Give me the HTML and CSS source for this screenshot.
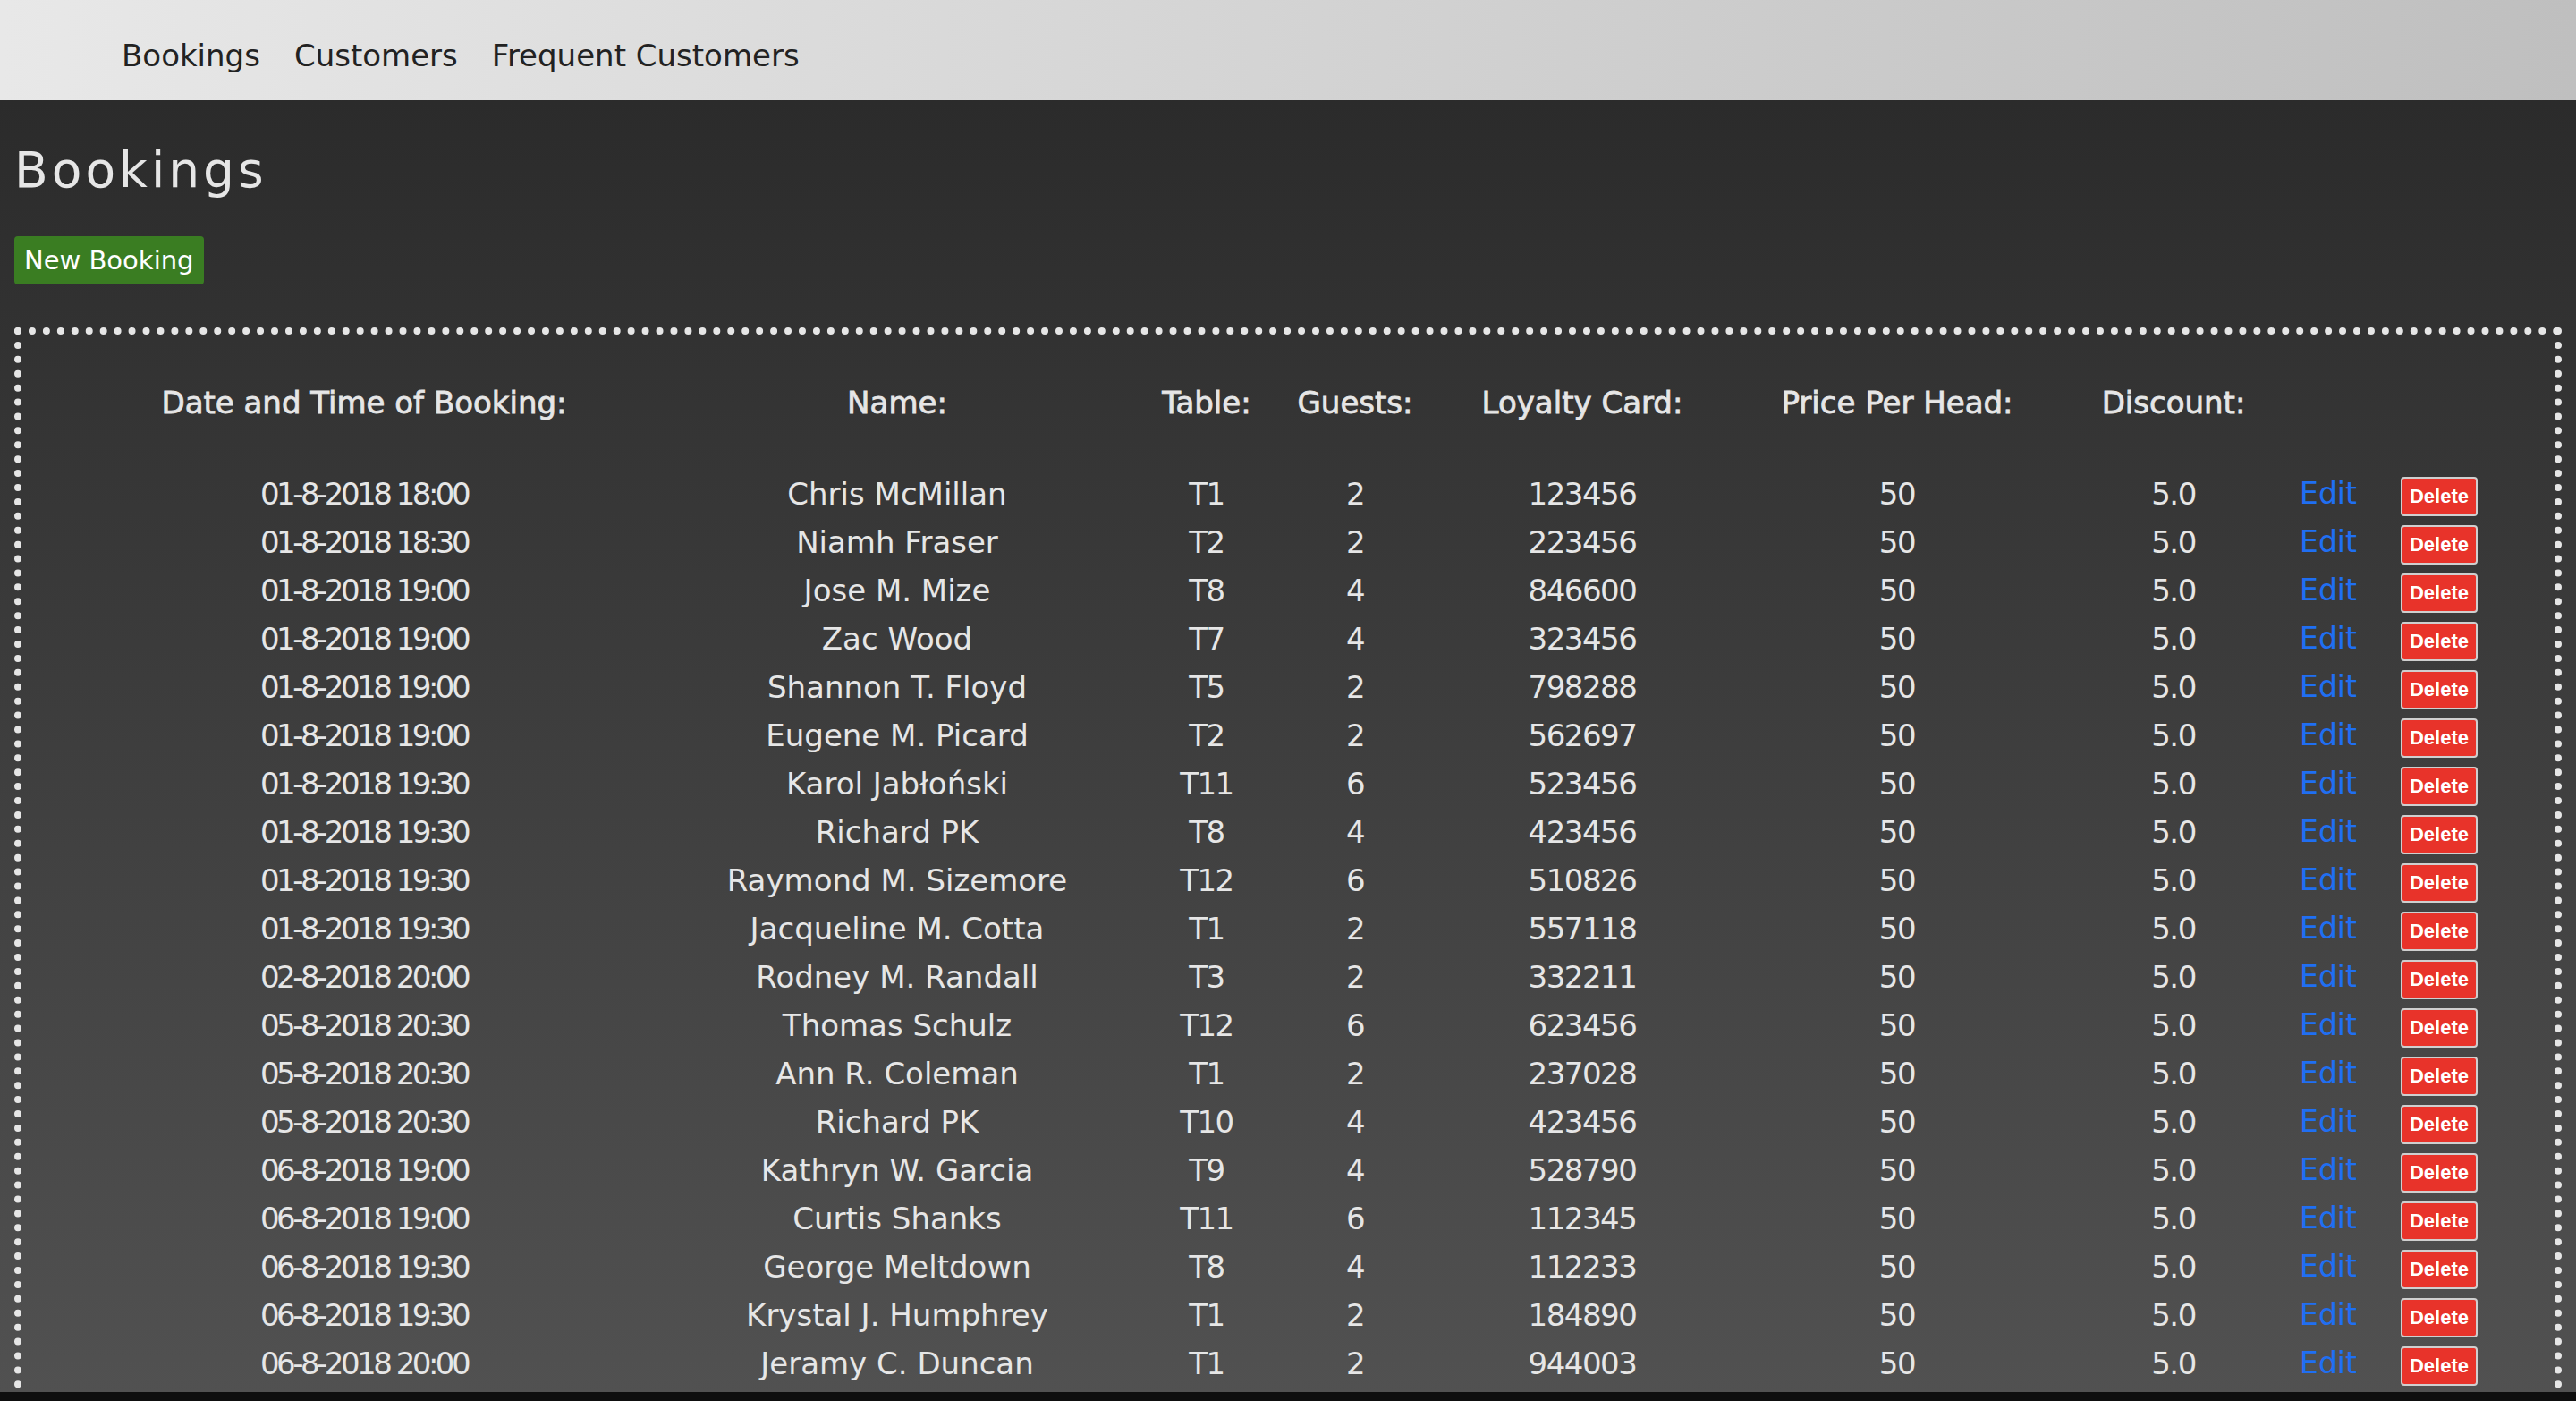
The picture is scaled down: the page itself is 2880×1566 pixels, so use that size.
FILE: index.html
```html
<!DOCTYPE html>
<html lang="en">
<head>
<meta charset="utf-8">
<title>Bookings</title>
<link rel="stylesheet" href="styles.css">
</head>
<body>
<div class="page">
  <nav class="topnav">
    <a class="navlink" href="#">Bookings</a>
    <a class="navlink" href="#">Customers</a>
    <a class="navlink" href="#">Frequent Customers</a>
  </nav>
  <main class="content">
    <h1 class="title">Bookings</h1>
    <a class="btn-new" href="#">New Booking</a>
    <section class="box">
      <table class="bookings">
        <colgroup>
          <col class="c-date"><col class="c-name"><col class="c-table"><col class="c-guests"><col class="c-card"><col class="c-price"><col class="c-disc"><col class="c-edit"><col class="c-del">
        </colgroup>
        <thead>
          <tr>
            <th>Date and Time of Booking:</th><th>Name:</th><th>Table:</th><th>Guests:</th><th>Loyalty Card:</th><th>Price Per Head:</th><th>Discount:</th><th></th><th></th>
          </tr>
        </thead>
        <tbody>
          <tr><td>01-8-2018 18:00</td><td>Chris McMillan</td><td>T1</td><td>2</td><td>123456</td><td>50</td><td>5.0</td><td><a class="edit" href="#">Edit</a></td><td><button class="del">Delete</button></td></tr>
          <tr><td>01-8-2018 18:30</td><td>Niamh Fraser</td><td>T2</td><td>2</td><td>223456</td><td>50</td><td>5.0</td><td><a class="edit" href="#">Edit</a></td><td><button class="del">Delete</button></td></tr>
          <tr><td>01-8-2018 19:00</td><td>Jose M. Mize</td><td>T8</td><td>4</td><td>846600</td><td>50</td><td>5.0</td><td><a class="edit" href="#">Edit</a></td><td><button class="del">Delete</button></td></tr>
          <tr><td>01-8-2018 19:00</td><td>Zac Wood</td><td>T7</td><td>4</td><td>323456</td><td>50</td><td>5.0</td><td><a class="edit" href="#">Edit</a></td><td><button class="del">Delete</button></td></tr>
          <tr><td>01-8-2018 19:00</td><td>Shannon T. Floyd</td><td>T5</td><td>2</td><td>798288</td><td>50</td><td>5.0</td><td><a class="edit" href="#">Edit</a></td><td><button class="del">Delete</button></td></tr>
          <tr><td>01-8-2018 19:00</td><td>Eugene M. Picard</td><td>T2</td><td>2</td><td>562697</td><td>50</td><td>5.0</td><td><a class="edit" href="#">Edit</a></td><td><button class="del">Delete</button></td></tr>
          <tr><td>01-8-2018 19:30</td><td>Karol Jabłoński</td><td>T11</td><td>6</td><td>523456</td><td>50</td><td>5.0</td><td><a class="edit" href="#">Edit</a></td><td><button class="del">Delete</button></td></tr>
          <tr><td>01-8-2018 19:30</td><td>Richard PK</td><td>T8</td><td>4</td><td>423456</td><td>50</td><td>5.0</td><td><a class="edit" href="#">Edit</a></td><td><button class="del">Delete</button></td></tr>
          <tr><td>01-8-2018 19:30</td><td>Raymond M. Sizemore</td><td>T12</td><td>6</td><td>510826</td><td>50</td><td>5.0</td><td><a class="edit" href="#">Edit</a></td><td><button class="del">Delete</button></td></tr>
          <tr><td>01-8-2018 19:30</td><td>Jacqueline M. Cotta</td><td>T1</td><td>2</td><td>557118</td><td>50</td><td>5.0</td><td><a class="edit" href="#">Edit</a></td><td><button class="del">Delete</button></td></tr>
          <tr><td>02-8-2018 20:00</td><td>Rodney M. Randall</td><td>T3</td><td>2</td><td>332211</td><td>50</td><td>5.0</td><td><a class="edit" href="#">Edit</a></td><td><button class="del">Delete</button></td></tr>
          <tr><td>05-8-2018 20:30</td><td>Thomas Schulz</td><td>T12</td><td>6</td><td>623456</td><td>50</td><td>5.0</td><td><a class="edit" href="#">Edit</a></td><td><button class="del">Delete</button></td></tr>
          <tr><td>05-8-2018 20:30</td><td>Ann R. Coleman</td><td>T1</td><td>2</td><td>237028</td><td>50</td><td>5.0</td><td><a class="edit" href="#">Edit</a></td><td><button class="del">Delete</button></td></tr>
          <tr><td>05-8-2018 20:30</td><td>Richard PK</td><td>T10</td><td>4</td><td>423456</td><td>50</td><td>5.0</td><td><a class="edit" href="#">Edit</a></td><td><button class="del">Delete</button></td></tr>
          <tr><td>06-8-2018 19:00</td><td>Kathryn W. Garcia</td><td>T9</td><td>4</td><td>528790</td><td>50</td><td>5.0</td><td><a class="edit" href="#">Edit</a></td><td><button class="del">Delete</button></td></tr>
          <tr><td>06-8-2018 19:00</td><td>Curtis Shanks</td><td>T11</td><td>6</td><td>112345</td><td>50</td><td>5.0</td><td><a class="edit" href="#">Edit</a></td><td><button class="del">Delete</button></td></tr>
          <tr><td>06-8-2018 19:30</td><td>George Meltdown</td><td>T8</td><td>4</td><td>112233</td><td>50</td><td>5.0</td><td><a class="edit" href="#">Edit</a></td><td><button class="del">Delete</button></td></tr>
          <tr><td>06-8-2018 19:30</td><td>Krystal J. Humphrey</td><td>T1</td><td>2</td><td>184890</td><td>50</td><td>5.0</td><td><a class="edit" href="#">Edit</a></td><td><button class="del">Delete</button></td></tr>
          <tr><td>06-8-2018 20:00</td><td>Jeramy C. Duncan</td><td>T1</td><td>2</td><td>944003</td><td>50</td><td>5.0</td><td><a class="edit" href="#">Edit</a></td><td><button class="del">Delete</button></td></tr>
        </tbody>
      </table>
    </section>
  </main>
</div>
</body>
</html>
```
FILE: styles.css
```css
html {
  background: #0e0e0e;
}
body {
  margin: 0;
  font-family: "DejaVu Sans", "Open Sans", sans-serif;
}
.page {
  height: 1556px;
  overflow: hidden;
  background: linear-gradient(to bottom, #2b2b2b 0px, #2b2b2b 112px, #515151 1556px);
}
.topnav {
  height: 112px;
  box-sizing: border-box;
  display: flex;
  align-items: flex-start;
  gap: 38px;
  padding: 45px 0 0 136px;
  background: linear-gradient(to right, #e8e8e8, #bfbfbf);
}
.navlink {
  font-size: 34px;
  color: #222;
  text-decoration: none;
  line-height: 34px;
}
.content {
  padding: 0 16px;
}
.title {
  margin: 45px 0 0;
  font-size: 55px;
  line-height: 66px;
  font-weight: normal;
  letter-spacing: 4px;
  color: #e6e6e6;
}
.btn-new {
  margin-top: 41px;
  display: inline-flex;
  align-items: center;
  height: 54px;
  padding: 0 11px;
  box-sizing: border-box;
  white-space: nowrap;
  background: #3a7d22;
  color: #fff;
  font-size: 29px;
  text-decoration: none;
  border-radius: 4px;
}
.box {
  margin-top: 48px;
  border: 8px dotted #e6e6e6;
  padding: 0 0 200px;
}
.bookings {
  width: 2740px;
  margin: 0 auto;
  table-layout: fixed;
  border-collapse: collapse;
  color: #e6e6e6;
  font-size: 34px;
}
.c-date { width: 674px; }
.c-name { width: 518px; }
.c-table { width: 174px; }
.c-guests { width: 158px; }
.c-card { width: 350px; }
.c-price { width: 354px; }
.c-disc { width: 264px; }
.c-edit { width: 82px; }
.c-del { width: 166px; }
.bookings th {
  height: 151px;
  padding: 0;
  font-weight: normal;
  -webkit-text-stroke: 0.8px #e6e6e6;
  text-align: center;
  vertical-align: middle;
  white-space: nowrap;
  line-height: 54px;
}
.bookings td {
  height: 54px;
  max-height: 54px;
  padding: 0;
  text-align: center;
  vertical-align: middle;
  white-space: nowrap;
  line-height: 54px;
}
.bookings td:nth-child(1) {
  letter-spacing: -3.5px;
}
.bookings td:nth-child(3),
.bookings td:nth-child(4),
.bookings td:nth-child(5),
.bookings td:nth-child(6),
.bookings td:nth-child(7) {
  letter-spacing: -1.5px;
}
.bookings td:nth-child(8),
.bookings td:nth-child(9) {
  line-height: 0;
}
.edit {
  color: #1f6ff2;
  text-decoration: none;
  font-size: 33px;
  line-height: 34px;
  display: inline-block;
}
.del {
  display: inline-block;
  vertical-align: middle;
  width: 86px;
  height: 44px;
  margin: 6px 0 0;
  padding: 0;
  background: #e8332a;
  color: #fff;
  border: 2px solid #cfcfcf;
  border-radius: 4px;
  font-family: "Liberation Sans", Arial, sans-serif;
  font-weight: bold;
  font-size: 22px;
  line-height: 38px;
}
```
